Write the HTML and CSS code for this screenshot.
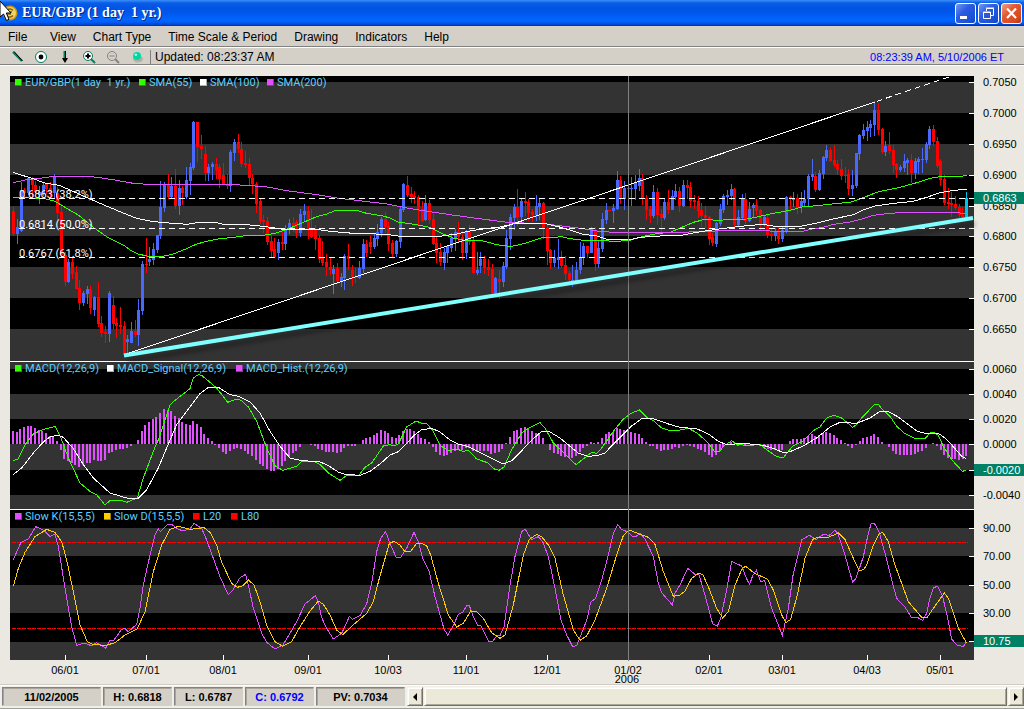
FILE: index.html
```html
<!DOCTYPE html>
<html lang="en">
<head>
<meta charset="utf-8">
<title>EUR/GBP (1 day 1 yr.)</title>
<link rel="stylesheet" href="styles.css">
</head>
<body>
<header class="titlebar">
  <svg class="coin" width="19" height="24" viewBox="0 0 19 24" aria-hidden="true">
    <circle cx="10" cy="12" r="7.5" fill="#c89a14"/>
    <circle cx="10" cy="12" r="6" fill="#f0d468"/>
    <path d="M13 9.5a4 4 0 1 0 0 5M7 11h5M7 13h4" fill="none" stroke="#8a6400" stroke-width="1.4"/>
    <path d="M0 0V16L3.500 13L6.500 19.500L9 18.300L6.300 12H11Z" fill="#fff" stroke="#000"/>
  </svg>
  <h1 class="title">EUR/GBP (1 day&nbsp; 1 yr.)</h1>
  <div class="window-buttons">
    <button class="winbtn" aria-label="Minimize"><svg width="19" height="19" viewBox="0 0 19 19"><path d="M4 12h7v3H4z" fill="#fff"/></svg></button>
    <button class="winbtn" aria-label="Restore"><svg width="19" height="19" viewBox="0 0 19 19"><path d="M7.500 7V4.500H14.500V11.500H12M7 4h8" fill="none" stroke="#fff"/><path d="M4.500 8H11.500V14.500H4.500ZM4 8.500H12" fill="none" stroke="#fff"/></svg></button>
    <button class="winbtn winbtn-close" aria-label="Close"><svg width="19" height="19" viewBox="0 0 19 19"><path d="M5 4.500L14 14M14 4.500L5 14" stroke="#fff" stroke-width="2.200"/></svg></button>
  </div>
</header>
<nav class="menubar">
  <button>File</button><button>View</button><button>Chart Type</button><button>Time Scale &amp; Period</button><button>Drawing</button><button>Indicators</button><button>Help</button>
</nav>
<div class="toolbar">
  <div class="tools">
    <button aria-label="Draw line"><svg width="16" height="14" viewBox="0 0 16 14"><path d="M4 2L13 11" stroke="#008060" stroke-width="2.400"/><path d="M5 1.500L13.500 11" stroke="#000"/></svg></button>
    <button aria-label="Point"><svg width="16" height="14" viewBox="0 0 16 14"><circle cx="8" cy="7" r="5.500" fill="#fff" stroke="#008060"/><circle cx="8" cy="7" r="2.400"/></svg></button>
    <button aria-label="Arrow"><svg width="16" height="14" viewBox="0 0 16 14"><path d="M7.500 1V11" stroke="#008060" stroke-width="2"/><path d="M8.500 1V11" stroke="#000"/><path d="M5 8H11L8 13Z"/></svg></button>
    <button aria-label="Zoom in"><svg width="16" height="14" viewBox="0 0 16 14"><circle cx="7" cy="6" r="4.500" fill="#fff" stroke="#008060"/><path d="M4.500 6h5M7 3.500v5" stroke="#000" stroke-width="2"/><path d="M10 9L14 13" stroke="#008060" stroke-width="2"/></svg></button>
    <button aria-label="Zoom out"><svg width="16" height="14" viewBox="0 0 16 14"><circle cx="7" cy="6" r="4.500" fill="none" stroke="#848484"/><path d="M4.500 6h5" stroke="#848484"/><path d="M10 9L14 13" stroke="#848484" stroke-width="2"/></svg></button>
    <button aria-label="Live"><svg width="16" height="14" viewBox="0 0 16 14"><ellipse cx="9" cy="9" rx="5" ry="3.500" fill="#b4b0a8"/><circle cx="8" cy="6" r="4" fill="#00d8a0"/><circle cx="6.800" cy="4.800" r="1.300" fill="#a8ffe8"/></svg></button>
  </div>
  <span class="updated">Updated: 08:23:37 AM</span>
  <time class="clock">08:23:39 AM, 5/10/2006 ET</time>
</div>
<main class="chart-area">
  <svg id="chart" class="chart" viewBox="0 66 1024 619" role="img" aria-label="EUR/GBP daily chart with MACD and slow stochastic"></svg>
</main>
<footer class="statusbar">
  <div class="cell cell-date">11/02/2005</div>
  <div class="cell">H: 0.6818</div>
  <div class="cell">L: 0.6787</div>
  <div class="cell cell-close">C: 0.6792</div>
  <div class="cell cell-pv">PV: 0.7034</div>
  <div class="scrollbar">
    <button class="arrow" aria-label="Scroll left"><svg width="6" height="8" viewBox="0 0 6 8"><path d="M5 0V8L1 4Z"/></svg></button>
    <div class="thumb"></div>
    <button class="arrow" aria-label="Scroll right"><svg width="6" height="8" viewBox="0 0 6 8"><path d="M1 0V8L5 4Z"/></svg></button>
  </div>
</footer>
<script src="chart.js"></script>
</body>
</html>
```
FILE: styles.css
```css
* { box-sizing: border-box; }
body {
  margin: 0;
  min-height: 100vh;
  display: flex;
  flex-direction: column;
  background: #ebe8e1;
  font: 12px "Liberation Sans", Arial, sans-serif;
  color: #000;
}
button {
  margin: 0;
  padding: 0;
  border: 0;
  background: none;
  font: inherit;
  color: inherit;
}
svg { display: block; }

.titlebar {
  flex: none;
  display: flex;
  align-items: center;
  height: 26px;
  padding-right: 2px;
  background: linear-gradient(#3c90f8 0, #0a5ce8 3px, #0054e3 8px, #0058ee 14px, #0066ff 19px, #0060f8 22px, #0040c8 25px, #0030a0 26px);
}
.coin { flex: none; }
.title {
  flex: 1;
  margin: 0 0 0 3px;
  font: bold 14px/24px "Liberation Serif", "Times New Roman", serif;
  color: #fff;
  text-shadow: 1px 1px 0 #002890;
}
.window-buttons { display: flex; gap: 2px; }
.winbtn {
  width: 21px;
  height: 21px;
  border: 1px solid #fff;
  border-radius: 3px;
  background: linear-gradient(135deg, #7098f4 0, #2c5ce0 40%, #1c50d8 80%, #1844b4 100%);
}
.winbtn-close { background: linear-gradient(135deg, #f0a088 0, #e05830 40%, #d84820 80%, #a83010 100%); }

.menubar {
  flex: none;
  display: flex;
  gap: 17px;
  height: 22px;
  padding: 0 8px 0;
  background: #d4d0c8;
  border-bottom: 1px solid #fff;
  box-shadow: inset 0 -1px 0 #808080;
}
.menubar button { min-width: 25px; text-align: left; line-height: 22px; }

.toolbar {
  flex: none;
  display: flex;
  align-items: center;
  height: 18px;
  padding: 0 20px 0 9px;
  background: #d4d0c8;
  border-bottom: 1px solid #fff;
  box-shadow: inset 0 -1px 0 #808080;
}
.tools { display: flex; gap: 8px; }
.updated {
  height: 14px;
  margin-left: 5px;
  padding-left: 4px;
  border-left: 1px solid #808080;
  line-height: 15px;
}
.clock { margin-left: auto; font-size: 11px; line-height: 18px; color: #00f; }

.chart-area { flex: 1; }
.chart { width: 100%; height: auto; }
.crisp { shape-rendering: crispEdges; }
.axis { font: 11px "Liberation Sans", Arial, sans-serif; }
.legend { font: 11px Roboto, sans-serif; fill: #5cd0ff; }
.fib { font: 11px Roboto, sans-serif; fill: #fff; }
.mid { text-anchor: middle; }
.light { fill: #fff; }

.statusbar {
  flex: none;
  display: flex;
  gap: 2px;
  height: 24px;
  padding: 1px 0 2px 2px;
  background: #f0eee8;
  border-top: 1px solid #fff;
  border-bottom: 1px solid #a0a098;
  box-shadow: 0 -1px 0 #d0ccc4;
}
.cell {
  flex: none;
  width: 69px;
  border: 1px solid;
  border-color: #848284 #d4d0c8 #d4d0c8 #848284;
  box-shadow: inset 1px 1px 0 #a8a49c;
  background: #d4d0c8;
  font-size: 11px;
  font-weight: bold;
  line-height: 18px;
  text-align: center;
}
.cell-date { width: 99px; }
.cell-close { color: #00f; }
.cell-pv { width: 89px; }
.scrollbar { flex: 1; display: flex; gap: 1px; background: #ece9d8; }
.arrow, .thumb {
  background: #ece9d8;
  border: 1px solid;
  border-color: #f8f6ee #747068 #747068 #f8f6ee;
  box-shadow: inset 1px 1px 0 #fff, inset -1px -1px 0 #aca899;
}
.arrow { flex: none; width: 16px; display: flex; align-items: center; justify-content: center; }
.thumb { flex: 1; }
```
FILE: chart.js
```js
const NS = 'http://www.w3.org/2000/svg';
const chart = document.getElementById('chart');

function add(tag, attrs, parent = chart, text) {
  const el = document.createElementNS(NS, tag);
  for (const k in attrs) el.setAttribute(k, attrs[k]);
  if (text !== undefined) el.textContent = text;
  parent.appendChild(el);
  return el;
}

// Series are stored in thirds of a pixel, relative to each panel's origin.
function group(x, y) {
  return add('g', { class: 'crisp', transform: `translate(${x} ${y}) scale(${1 / 3})` });
}
function line(parent, color, points) {
  add('polyline', { points, fill: 'none', stroke: color, 'stroke-width': 3 }, parent);
}

const GREEN = '#33ff00', PINK = '#e050ff', WHITE = '#fff', GOLD = '#ffcc00';

// Background bands
const base = add('g', { class: 'crisp' });
add('rect', { x: 10, y: 76, width: 964, height: 584, fill: '#000' }, base);
[[82, 113], [144, 175], [206, 236], [267, 298], [329, 369], [394, 419], [444, 470],
 [495, 510], [528, 556], [585, 613], [642, 660]].forEach(([a, b]) =>
  add('rect', { x: 10, y: a, width: 964, height: b - a, fill: '#333' }, base));
[361, 509].forEach(y => add('rect', { x: 10, y, width: 964, height: 1, fill: '#fff' }, base));

// Candles: colour and x, high, body top, body bottom, low
const candles = [
[0, `r40 410 423 492 498,b52 447 471 492 522,b64 335 360 484 486,r73 353 360 370 380,b85 320 325 370 374,r97 322 324 346 385,r106 334 345 365 372,b118 348 365 375 402,b130 340 345 370 378,r139 338 342 356 372,r151 336 354 370 384,b163 312 322 368 386,r172 350 368 428 450,r184 402 426 556 564,r196 545 556 636 648,b205 566 576 636 640,r217 564 576 612 626,r229 588 605 656 658,r238 630 654 698 720,b250 662 668 698 708,b262 648 657 672 702,r271 648 657 714 732,b283 678 682 720 738,r295 636 681 762 772,r304 738 759 789 801,r316 768 786 792 819,b328 663 669 792 816,r340 678 705 762 777,r349 744 759 768 804,r361 711 765 771 792,r373 753 768 855 858,b382 795 807 816 852,b394 756 783 819 819,r406 750 783 795 801,b415 687 720 795 828,b427 573 582 723 735,r439 504 581 585 609,b448 531 567 576 588,b460 519 537 570 585,b472 495 495 540 549,b481 333 411 498 507,b493 336 343 414 426,r505 312 342 381 387,b514 321 348 381 384,r526 297 348 408 417,b538 330 354 408 435,r547 348 354 369 405,b559 291 330 381 387,b571 279 291 333 375,b580 153 156 294 300,r592 156 156 231 276,r604 195 228 238 267,r616 228 252 309 333,b625 282 291 309 333,b637 276 282 291 330,r649 264 282 300 327,r658 282 292 326 354,r670 279 315 342 342,r682 312 342 348 357,b691 240 246 348 366,b703 207 216 249 273,r715 192 216 237 249,r724 216 237 282 291,r736 243 279 285 294,r748 264 282 324 345,r757 312 324 342 372,r769 336 342 402 429`],
[250, `r31 387 393 453 462,r40 435 450 456 490,r52 441 453 515 525,r64 490 513 542 561,r73 503 537 561 564,b85 507 516 549 570,r97 475 515 522 540,b106 465 478 522 540,b118 447 459 478 492,r130 441 458 475 486,r139 450 456 489 504,b151 417 432 489 501,b163 402 423 435 456,r175 407 423 480 507,r184 417 477 501 504,r196 465 480 507 540,r208 495 504 567 579,r217 513 563 579 588,r229 552 575 591 618,r241 563 591 600 615,b250 585 597 612 672,r262 579 594 633 642,b274 609 621 636 651,b283 552 558 624 660,r295 522 558 567 600,r307 585 600 621 648,r316 594 620 624 639,b328 573 594 624 627,b340 507 521 597 609,r349 510 521 549 561,r361 498 515 531 552,b373 492 504 531 537,b382 462 486 507 528,b394 441 447 489 501,r406 426 447 471 489,r415 456 468 522 543,r427 510 519 552 562,b439 510 513 552 561,b451 411 417 516 534,b460 339 342 420 426,r472 318 345 375 381,r484 351 372 381 399,r493 363 378 384 402,r505 375 381 417 465,r517 393 417 453 456,b526 375 399 450 453,r538 390 399 450 462,r550 432 447 522 525,r559 501 519 549 579,r571 519 546 576 588,b583 534 546 579 600,b592 528 528 549 579,b604 489 504 534 546,b616 477 486 507 543,r625 456 486 501 519,r637 483 501 549 570,b649 480 486 549 567,r658 465 486 516 525,r670 498 513 609 612,b682 546 600 609 615,b691 546 567 588 609,r703 558 567 594 612,r715 567 591 600 618,r727 582 597 669 675,b736 621 624 669 672,r748 600 628 636 687,b760 576 588 636 651,b769 480 504 591 597`],
[500, `b31 432 441 507 540,b43 402 411 444 480,r52 357 411 441 468,b64 387 393 441 453,r76 366 393 399 438,r85 387 396 429 453,r97 417 426 435 456,b109 375 408 435 453,b118 387 399 411 450,r130 396 399 474 507,r142 465 474 543 585,r151 537 540 579 597,b163 540 563 579 591,b175 507 561 570 597,r184 543 563 588 594,r196 558 585 612 630,r208 603 609 630 639,b217 585 630 636 651,b229 576 600 636 630,b241 516 561 600 612,b250 519 528 564 585,r262 528 528 549 564,b274 471 475 549 549,r286 471 483 582 603,b295 510 534 582 594,b307 429 447 537 546,b319 399 420 450 462,r328 420 420 423 423,b340 402 414 423 459,b352 303 330 417 420,r361 318 330 387 402,b373 333 354 387 420,r385 354 354 357 357,b394 321 354 357 408,b406 315 337 357 390,b418 297 324 348 363,r427 312 324 384 405,r439 375 384 420 450,r451 408 417 438 459,b460 345 366 438 444,r472 354 366 435 465,r484 417 432 444 486,b493 387 396 444 450,r505 360 396 420 432,b517 360 378 420 420,b526 342 363 381 390,r538 351 363 408 426,b550 330 345 408 411,r562 330 345 354 387,r571 336 351 393 414,r583 375 390 396 417,r595 378 393 423 444,r604 399 420 438 471,r616 408 435 444 474,r628 438 441 507 525,r637 489 501 519 528,b649 456 459 522 531,b661 402 417 462 468,b670 372 378 420 429,b682 360 375 381 405,b694 342 357 378 390,r703 354 357 465 471,b715 420 441 465 471,b727 372 384 444 450,r736 369 387 453 462,b748 396 417 453 456,b760 399 405 414 441,r769 387 405 423 435`],
[750, `r31 417 420 462 480,b43 435 441 463 468,r52 435 444 495 504,r64 477 492 497 513,b76 474 483 498 513,r85 468 486 507 522,b97 468 480 507 516,b109 378 381 486 489,r121 378 381 387 423,b130 366 387 390 411,r142 372 384 414 432,b154 366 393 411 429,b163 360 386 399 411,b175 312 318 387 408,b187 267 312 321 333,r196 306 318 360 366,b208 300 309 360 363,b220 258 261 312 327,b229 225 240 264 273,r241 234 240 273 276,r253 225 270 285 291,r262 270 282 300 315,r274 267 297 318 330,r286 291 315 318 339,r295 297 312 357 375,b307 300 345 357 378,b319 249 249 348 354,b328 192 195 252 270,b340 162 180 198 207,b352 153 171 183 213,b361 150 162 174 201,b373 93 120 165 198,r385 99 120 180 195,r397 174 177 246 252,b406 213 228 246 258,r418 186 225 243 252,r430 225 240 285 309,r439 279 282 300 324,b451 285 291 300 306,b463 252 273 294 306,b472 264 270 279 315,r484 252 270 309 339,b496 264 273 309 327,b505 261 267 276 312,b517 234 267 270 309,b529 216 222 270 279,b538 168 177 225 237,r550 165 177 216 228,r562 201 213 288 294,r571 267 273 330 348,r583 315 327 399 405,r595 354 396 402 417,r604 366 399 405 441,r616 378 402 414 420,r628 402 411 435 444,r637 411 435 441 444,c649 366 384 441 441`]
];
const candleColors = { r: '#ff0000', b: '#4868ff', c: '#00c4f0' };
const candleLayer = add('g', { class: 'crisp' });
for (const [offset, list] of candles) {
  for (const item of list.split(',')) {
    const fill = candleColors[item[0]];
    const [x, hi, top, bottom, lo] = item.slice(1).split(' ').map(Number);
    const px = offset + Math.floor(x / 3);
    const py = v => 70 + Math.round(v / 3);
    add('rect', { x: px, y: py(hi), width: 1, height: Math.max(1, py(lo) - py(hi)), fill }, candleLayer);
    add('rect', { x: px - 1, y: py(top), width: 3, height: Math.max(1, py(bottom) - py(top)), fill }, candleLayer);
  }
}

// Moving averages
const price = group(0, 70);
line(price, GREEN, '40,383 130,385 163,393 200,415 235,435 280,472 320,500 375,528 395,543 415,552 440,558 475,560 500,557 525,550 555,538 590,522 625,513 660,506 700,502 750,495 785,497 825,490 850,482 880,470 915,455 950,440 980,432 1008,421 1070,421 1100,430 1145,437 1170,444 1195,456 1250,464 1290,472 1325,490 1360,504 1390,510 1450,513 1490,524 1530,529 1540,528 1575,520 1630,502 1665,502 1685,500 1710,506 1750,511 1800,512 1850,514 1888,511 1930,499 1970,491 2010,487 2050,470 2080,457 2115,448 2150,451 2190,449 2240,447 2280,439 2320,430 2370,421 2405,411 2460,406 2505,401 2550,397 2590,383 2630,367 2660,360 2700,352 2750,338 2790,325 2825,319 2885,319 2900,316');
line(price, PINK, '40,338 80,329 120,325 160,319 265,319 300,323 350,331 400,340 445,343 720,345 780,349 810,352 860,362 950,374 1010,384 1070,391 1160,402 1210,412 1270,422 1350,434 1430,445 1530,458 1550,458 1640,462 1700,470 1750,476 1790,483 1840,487 2040,487 2120,484 2200,481 2280,481 2325,484 2410,484 2430,478 2470,472 2500,463 2550,456 2590,446 2620,436 2670,430 2720,427 2860,427 2900,431');
line(price, WHITE, '40,307 70,317 100,326 130,338 160,343 180,347 210,360 250,378 300,400 360,425 410,445 450,453 490,458 540,461 560,463 590,458 650,458 665,462 740,464 780,468 825,474 850,478 950,478 990,484 1060,490 1160,493 1200,499 1320,499 1370,492 1400,485 1440,478 1500,471 1540,462 1590,459 1640,462 1675,470 1710,480 1750,493 1790,498 1820,508 1895,508 1920,502 1980,498 2045,496 2085,488 2115,483 2180,474 2240,467 2290,463 2325,469 2400,469 2450,459 2500,447 2560,434 2590,420 2625,408 2680,400 2740,394 2780,382 2820,368 2850,363 2900,357');
line(price, WHITE, '376,853 2625,96');
add('polyline', { points: '2630,94 2855,18', fill: 'none', stroke: WHITE, 'stroke-width': 3, 'stroke-dasharray': '18 12' }, price);

// Retracement levels
[[198, '0.6863 (38.2%)'], [228, '0.6814 (50.0%)'], [257, '0.6767 (61.8%)']].forEach(([y, label]) => {
  add('path', { class: 'crisp', d: `M19 ${y + 0.5}H974`, stroke: '#fff', 'stroke-dasharray': '6 4' });
  add('text', { class: 'fib', x: 19, y }, chart, label);
});

// MACD histogram: one bar end per candle, zero at 258
const hist = '219 222 213 207 204 204 210 216 219 225 234 234 249 275 303 309 315 321 327 321 315 315 306 308 309 306 285 282 276 273 273 270 264 258 246 219 201 192 183 177 165 153 156 159 174 180 192 198 201 189 198 207 228 240 249 261 270 282 288 279 273 270 273 279 288 294 306 318 324 333 339 339 333 324 309 297 285 279 267 258 258 261 264 273 276 282 282 282 285 282 270 264 264 264 258 246 240 237 231 225 216 219 225 237 240 231 219 213 213 219 228 240 243 252 267 282 291 294 291 285 279 276 276 270 270 279 282 279 279 279 288 285 282 273 255 237 219 216 210 207 213 219 225 228 240 258 276 285 288 294 297 300 300 294 282 270 264 252 255 252 240 228 222 222 210 213 216 219 222 225 228 240 252 264 264 273 279 276 276 273 267 270 264 261 264 267 273 276 282 291 297 291 279 267 258 252 261 264 258 264 258 258 258 264 270 273 276 276 279 276 258 249 243 243 243 240 234 228 234 231 225 222 225 231 240 246 255 264 270 261 249 240 237 234 228 237 252 258 267 279 288 291 291 291 291 288 282 279 270 258 255 264 276 291 300 303 303 306 303 294'.split(' ');
const histLayer = add('g', { class: 'crisp', fill: PINK });
hist.forEach((v, i) => {
  const x = Math.floor(12.4 + i * 3.681), y = 358 + Math.round(v / 3);
  if (y !== 444) add('rect', { x, y: Math.min(444, y), width: 2, height: Math.abs(444 - y) }, histLayer);
});
const macd = group(0, 358);
line(macd, GREEN, '40,308 54,303 75,260 100,228 130,214 160,207 165,205 185,245 205,300 240,375 270,400 290,410 315,441 330,428 365,428 380,433 412,420 430,360 460,280 475,245 490,200 510,140 525,127 570,92 580,60 595,50 605,52 650,90 683,133 710,123 725,128 745,147 770,190 800,270 825,323 848,337 890,325 905,310 940,310 960,320 985,345 1020,367 1040,352 1075,354 1095,328 1115,315 1150,264 1170,260 1180,264 1195,258 1220,207 1248,189 1270,198 1280,197 1298,217 1320,262 1345,278 1370,273 1390,280 1405,277 1430,303 1465,315 1480,332 1497,337 1512,327 1535,275 1565,225 1590,208 1620,194 1635,210 1660,255 1690,283 1728,320 1775,283 1790,286 1805,270 1840,220 1870,183 1895,165 1918,156 1940,178 1960,188 1985,210 2008,217 2040,216 2065,211 2090,224 2120,250 2145,282 2160,280 2170,265 2195,248 2210,260 2245,262 2280,260 2300,275 2330,296 2350,299 2365,280 2380,263 2410,248 2440,218 2460,207 2480,180 2502,172 2525,180 2558,208 2570,200 2585,180 2625,138 2635,139 2645,152 2670,175 2690,205 2715,227 2745,241 2775,242 2790,225 2800,223 2815,232 2830,265 2855,305 2887,340 2898,337');
line(macd, WHITE, '40,349 65,330 100,285 130,252 150,237 172,231 190,238 220,272 250,320 280,360 330,405 380,420 415,420 440,395 475,330 500,270 530,200 560,160 600,107 625,88 655,88 690,110 715,115 750,132 780,165 810,220 840,265 870,300 900,307 960,312 980,320 1015,342 1035,349 1080,352 1110,340 1140,318 1170,291 1195,281 1215,262 1240,234 1265,215 1295,211 1320,222 1350,246 1375,258 1405,266 1440,283 1480,303 1510,318 1535,308 1565,278 1600,242 1625,220 1645,219 1680,240 1710,265 1735,285 1765,295 1790,293 1815,285 1840,258 1870,228 1895,204 1925,182 1955,181 1990,192 2008,199 2040,208 2090,212 2125,228 2155,250 2180,260 2230,256 2290,262 2325,273 2350,284 2370,281 2410,264 2450,240 2490,207 2520,193 2570,196 2610,180 2640,160 2665,161 2695,177 2750,219 2780,227 2815,226 2835,240 2860,266 2885,295 2898,301');

// Slow stochastic
[542, 628].forEach(y => add('path', { class: 'crisp', d: `M12 ${y + 0.5}H968`, stroke: '#ff0000', 'stroke-dasharray': '4 1' }));
const stoch = group(0, 505);
line(stoch, PINK, '40,164 63,112 85,102 107,65 130,75 150,94 165,87 175,125 200,280 215,365 230,421 255,414 275,423 290,413 318,430 328,408 342,405 365,373 375,371 385,380 410,358 420,310 430,240 450,150 465,90 475,72 482,80 500,60 515,58 530,70 548,78 570,72 582,55 605,70 620,105 640,160 660,215 675,248 685,268 697,258 705,243 720,218 737,208 745,240 760,310 785,385 800,412 825,432 848,421 865,393 890,350 915,297 930,285 946,272 955,290 965,338 980,370 1000,402 1025,385 1048,335 1058,343 1080,332 1100,297 1115,235 1130,140 1142,100 1157,80 1170,115 1188,156 1202,157 1220,130 1242,82 1255,110 1267,157 1287,198 1305,275 1332,372 1343,390 1360,362 1375,328 1388,322 1400,302 1408,302 1420,335 1432,360 1442,362 1465,408 1477,410 1490,393 1500,392 1512,365 1530,240 1545,155 1565,80 1575,72 1595,104 1615,95 1628,110 1645,155 1665,250 1683,345 1700,390 1718,425 1730,422 1750,372 1762,340 1772,292 1787,280 1805,225 1820,170 1840,85 1853,58 1865,74 1882,80 1898,94 1910,93 1920,84 1935,102 1960,155 1975,235 1985,263 2017,300 2025,265 2040,240 2063,190 2085,208 2097,209 2115,270 2138,357 2152,363 2162,340 2180,255 2195,169 2225,183 2240,222 2249,238 2258,212 2269,196 2282,230 2294,227 2315,310 2347,391 2365,310 2380,205 2405,105 2428,91 2448,104 2470,88 2488,91 2504,76 2514,86 2535,150 2550,205 2558,230 2568,220 2590,155 2605,85 2613,57 2623,55 2637,80 2655,145 2675,225 2690,280 2715,306 2734,337 2752,337 2768,346 2780,325 2788,285 2800,249 2813,243 2827,272 2840,325 2855,402 2870,420 2890,425 2900,410');
line(stoch, GOLD, '40,244 55,190 75,142 105,95 140,73 165,82 185,110 200,165 220,260 240,360 262,410 280,419 318,421 345,413 375,390 412,371 435,320 460,200 485,120 510,73 535,64 570,73 612,68 630,82 650,120 665,172 695,235 712,247 727,243 745,225 762,240 780,290 800,360 825,410 848,424 875,410 900,365 930,318 955,288 970,298 990,330 1010,375 1028,389 1065,355 1100,325 1120,290 1138,220 1168,115 1182,109 1200,120 1215,141 1233,138 1250,115 1263,114 1280,122 1292,150 1315,235 1345,330 1370,366 1390,355 1412,318 1430,320 1450,340 1475,383 1500,400 1515,390 1540,300 1570,150 1588,103 1610,88 1625,95 1645,120 1665,160 1690,270 1720,375 1740,406 1760,393 1785,345 1820,250 1850,150 1870,92 1888,75 1910,84 1945,97 1965,118 1990,200 2020,274 2040,270 2055,258 2075,220 2095,205 2108,208 2125,245 2150,310 2168,339 2185,320 2205,240 2227,190 2237,184 2265,206 2302,222 2320,255 2345,330 2358,353 2372,343 2392,270 2415,160 2438,103 2455,97 2485,97 2515,84 2535,103 2560,160 2578,197 2592,193 2602,175 2618,125 2637,87 2648,82 2665,110 2685,180 2725,290 2765,337 2782,337 2800,310 2833,264 2845,280 2875,370 2900,415');

// Support trend line with its soft shadow
add('path', { class: 'crisp', d: 'M628.5 76V661', stroke: '#808080' });
add('path', { d: 'M128 361L975 224', stroke: '#000', 'stroke-opacity': '.35', 'stroke-width': 4, style: 'filter:blur(2px)' });
add('path', { d: 'M124 355.5L973 218', stroke: '#80ffff', 'stroke-width': 4 });

// Legends
const legend = (y, items) => items.forEach(([x, color, edge, label]) => {
  add('rect', { class: 'crisp', x, y: y - 7, width: 7, height: 7, fill: edge });
  add('rect', { class: 'crisp', x, y: y - 7, width: 6, height: 6, fill: color });
  add('text', { class: 'legend', x: x + 10, y }, chart, label);
});
legend(86, [[15, GREEN, '#1ca000', 'EUR/GBP(1 day\u00a0 1 yr.)'], [139, GREEN, '#1ca000', 'SMA(55)'], [200, WHITE, '#b0b0b0', 'SMA(100)'], [267, PINK, '#9030a8', 'SMA(200)']]);
legend(372, [[15, GREEN, '#1ca000', 'MACD(12,26,9)'], [107, WHITE, '#b0b0b0', 'MACD_Signal(12,26,9)'], [236, PINK, '#9030a8', 'MACD_Hist.(12,26,9)']]);
legend(520, [[15, PINK, '#9030a8', 'Slow K(15,5,5)'], [104, GOLD, '#a08000', 'Slow D(15,5,5)'], [193, '#ff0000', '#a00000', 'L20'], [231, '#ff0000', '#a00000', 'L80']]);

// Value axis
[[82, '0.7050'], [113, '0.7000'], [144, '0.6950'], [175, '0.6900'], [206, '0.6850'], [236, '0.6800'], [267, '0.6750'], [298, '0.6700'], [329, '0.6650'],
 [369, '0.0060'], [394, '0.0040'], [419, '0.0020'], [444, '0.0000'], [495, '-0.0040'],
 [528, '90.00'], [556, '70.00'], [585, '50.00'], [613, '30.00']].forEach(([y, label]) => {
  add('rect', { class: 'crisp', x: 969, y, width: 5, height: 1, fill: '#fff' });
  add('text', { class: 'axis', x: 983, y: y + 4 }, chart, label);
});
[[198, '0.6863'], [470, '-0.0020'], [641, '10.75']].forEach(([y, label]) => {
  add('rect', { class: 'crisp', x: 969, y, width: 5, height: 1, fill: '#fff' });
  add('rect', { class: 'crisp', x: 974, y: y - 6, width: 50, height: 12, fill: '#008064' });
  add('text', { class: 'axis light', x: 983, y: y + 4 }, chart, label);
});

// Date axis
[[65, '06/01'], [146, '07/01'], [223, '08/01'], [308, '09/01'], [388, '10/03'], [466, '11/01'], [547, '12/01'], [628, '01/02'], [709, '02/01'], [782, '03/01'], [867, '04/03'], [940, '05/01']].forEach(([x, label]) => {
  if (x !== 628) add('rect', { class: 'crisp', x, y: 655, width: 1, height: 5, fill: '#fff' });
  add('text', { class: 'axis mid', x, y: 674 }, chart, label);
});
add('text', { class: 'axis mid', x: 627, y: 683 }, chart, '2006');
```
